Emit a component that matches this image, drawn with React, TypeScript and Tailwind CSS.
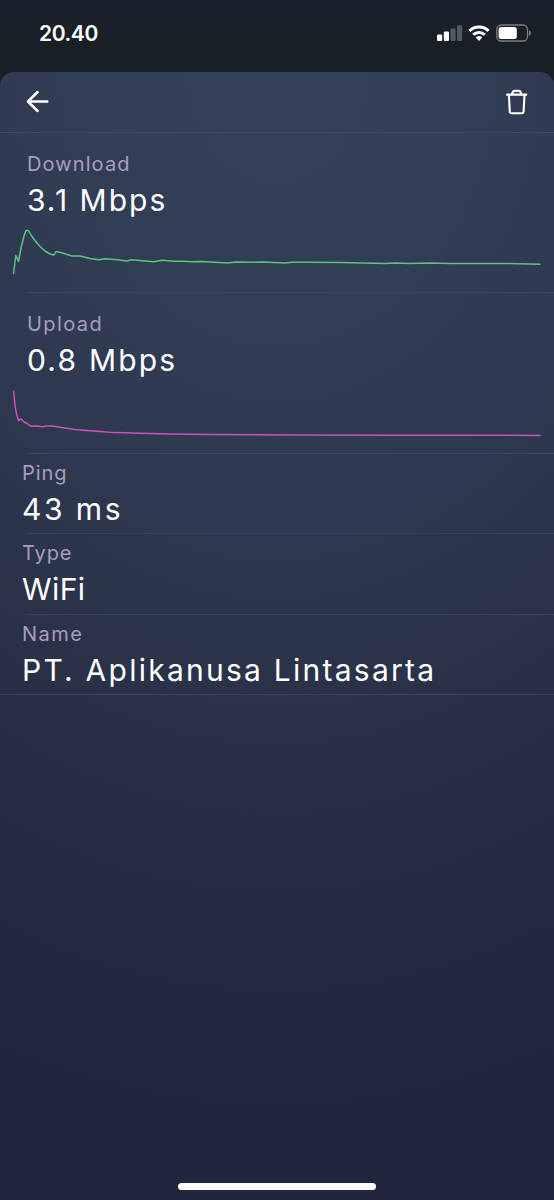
import clsx from "clsx";

interface Metric {
    label: string;
    value: string;
    labelClass: string;
    valueClass: string;
}

interface ChartMetric extends Metric {
    color: string;
    points: string;
}

const charts: ChartMetric[] = [
    {
        label: "Download",
        value: "3.1 Mbps",
        labelClass: "tracking-[1.1px]",
        valueClass: "tracking-[2px]",
        color: "#5fc283",
        points:
            "13.5,54 15.8,35.5 18.5,41.5 21,28 24,16 26,10.5 28.5,10.5 31,15 35,20.5 40,26.5 45,31 50,34 54,35 56,31.5 61,32.5 67,34.5 72,36 80,36 90,38.5 99,39.8 105,38.8 115,39.5 127,41 131,39.7 142,40.7 154,41.8 162,40.3 174,41.3 182,41.2 192,41.8 202,41.4 214,42.2 228,43 236,42 250,42.3 262,42.1 285,43 292,42.2 310,42.3 340,42.4 362,43 385,43.4 395,43.1 410,43.4 430,43 450,43.4 500,43.4 540.5,44.2",
    },
    {
        label: "Upload",
        value: "0.8 Mbps",
        labelClass: "tracking-[1.4px]",
        valueClass: "tracking-[2.2px]",
        color: "#cb52be",
        points:
            "13.5,10.5 15,25 16.5,34 18.5,40.5 21,39 24,42 27,43.5 31,46.3 36,46 43,46.8 46,46 52,46 62,47.6 75,49.5 90,50.8 110,52.2 140,53.3 170,54 210,54.5 300,55 400,55.2 540.5,55.4",
    },
];

const details: Metric[] = [
    { label: "Ping", value: "43 ms", labelClass: "tracking-[0.9px]", valueClass: "tracking-[2.5px]" },
    { label: "Type", value: "WiFi", labelClass: "tracking-[0.9px]", valueClass: "tracking-[0.4px]" },
    { label: "Name", value: "PT. Aplikanusa Lintasarta", labelClass: "tracking-[1.5px]", valueClass: "tracking-[2.25px]" },
];

function MetricText({ label, value, labelClass, valueClass }: Metric) {
    return (
        <div className="whitespace-nowrap">
            <p className={clsx("text-[20px] leading-[28px] text-[#a99cbd]", labelClass)}>{label}</p>
            <p className={clsx("text-[30px] leading-[44px] text-white", valueClass)}>{value}</p>
        </div>
    );
}

function StatusBar() {
    return (
        <div className="flex h-[72px] items-start justify-between pl-[39px] pr-[22px]">
            <span className="mt-[20px] text-[21px] leading-[27px] font-semibold tracking-[-0.4px] text-white">20.40</span>
            <div className="mt-[24px] flex items-center">
                <svg width="26" height="18" viewBox="0 0 26 18" fill="#fff">
                    <rect x="0" y="10.5" width="5.2" height="6.5" rx="1.3" />
                    <rect x="6.8" y="7.5" width="5.2" height="9.5" rx="1.3" />
                    <rect x="13.4" y="4.5" width="5.2" height="12.5" rx="1.3" opacity=".25" />
                    <rect x="20" y="1.2" width="5.2" height="15.8" rx="1.3" opacity=".25" />
                </svg>
                <svg className="ml-[5px]" width="22" height="18" viewBox="0 0 22 18" fill="none" stroke="#fff" strokeWidth="3">
                    <path d="M1.4 6.8a13.8 13.8 0 0 1 19.2 0" />
                    <path d="M5.2 10.7a8.4 8.4 0 0 1 11.6 0" />
                    <path d="M7.8 13.5a4.7 4.7 0 0 1 6.4 0L11 17z" fill="#fff" stroke="none" />
                </svg>
                <svg className="ml-[6px]" width="36" height="18" viewBox="0 0 36 18">
                    <rect x=".8" y="1" width="30.7" height="16" rx="4.5" fill="none" stroke="#fff" strokeOpacity=".42" strokeWidth="1.3" />
                    <rect x="2.6" y="3" width="18.2" height="12" rx="2.5" fill="#fff" />
                    <path d="M33 6.5v5.2c2.4-.9 2.4-4.3 0-5.2z" fill="#fff" opacity=".45" />
                </svg>
            </div>
        </div>
    );
}

function Header() {
    return (
        <header className="flex h-[61px] items-center justify-between border-b border-[#414c64] pb-px pl-[26px] pr-[26px]">
            <button aria-label="Back">
                <svg width="23" height="23" viewBox="0 0 23 23" fill="none" stroke="#fff" strokeWidth="2.5" strokeLinecap="round" strokeLinejoin="round">
                    <path d="M11.6 2 1.9 11.5l9.7 9.5M2 11.5h19.3" />
                </svg>
            </button>
            <button aria-label="Delete">
                <svg width="22" height="26" viewBox="0 0 22 26" fill="none" stroke="#fff" strokeWidth="2.1" strokeLinecap="round" strokeLinejoin="round">
                    <path d="M1 5.6h19.4M2.9 5.8l.9 17q.1 1.5 1.5 1.5h10.8q1.4 0 1.5-1.5l.9-17" />
                    <path d="M5.8 5.4 7 2.8q.4-.9 1.4-.9h4.6q1 0 1.4.9l1.2 2.6" />
                </svg>
            </button>
        </header>
    );
}

export default function App() {
    return (
        <div className="flex h-[1200px] w-[554px] flex-col overflow-hidden bg-linear-to-b from-[#1a202b] from-0% to-[#172024] to-[72px] font-['Inter',sans-serif]">
            <StatusBar />
            <main className="flex flex-1 flex-col rounded-t-[14px] bg-[radial-gradient(ellipse_900px_1130px_at_50%_0%,#35415b_0%,#303b53_32%,#2a3349_54%,#272c43_68%,#24283f_82%,#22263c_100%)]">
                <Header />
                {charts.map(({ color, points, ...metric }, i) => (
                    <section key={metric.label} className={clsx("flex flex-col", i === 0 ? "h-[160px]" : "h-[161px]")}>
                        <div className="pt-[17px] pl-[27px]">
                            <MetricText {...metric} />
                        </div>
                        <svg className="-mt-[2px] block shrink-0" width="554" height="66" viewBox="0 0 554 66" fill="none">
                            <polyline points={points} stroke={color} strokeWidth="1.5" strokeLinejoin="round" />
                        </svg>
                        <div className="mt-auto ml-[27px] h-px shrink-0 bg-[#3d4860]" />
                    </section>
                ))}
                {details.map((metric, i) => (
                    <section key={metric.label} className={clsx("flex flex-col", i === 1 ? "h-[81px]" : "h-[80px]")}>
                        <div className="pt-[5px] pl-[22px]">
                            <MetricText {...metric} />
                        </div>
                        <div className={clsx("mt-auto h-px shrink-0 bg-[#394259]", i < details.length - 1 && "ml-[27px]")} />
                    </section>
                ))}
                <div className="mt-auto mb-[10px] h-[7px] w-[198px] self-center rounded-full bg-white" />
            </main>
        </div>
    );
}
